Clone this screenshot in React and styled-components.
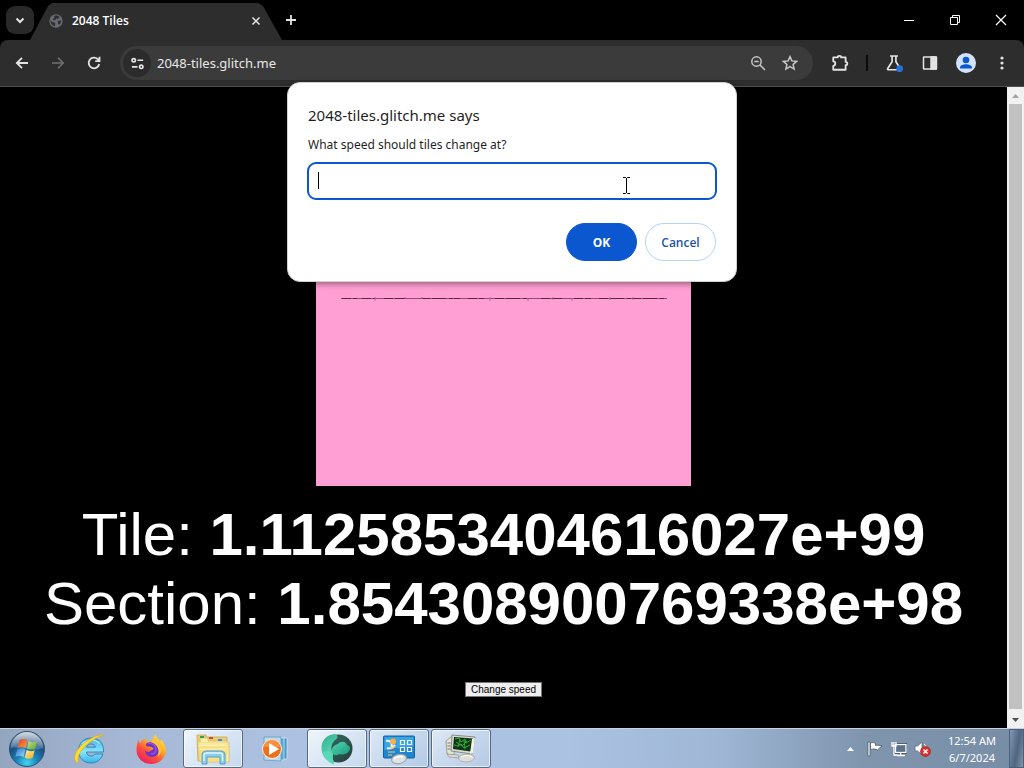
import React from "react";
import styled, { createGlobalStyle } from "styled-components";

const GlobalStyle = createGlobalStyle`
  * { box-sizing: border-box; }
  body { margin: 0; background: #000; }
  button, input { font-family: inherit; margin: 0; padding: 0; }
  svg { display: block; flex: none; }
`;

const uiFont = `"Noto Sans", "Open Sans", sans-serif`;

const Desktop = styled.div`
  position: relative;
  display: flex;
  flex-direction: column;
  min-height: 100vh;
  background: #000;
  font-family: ${uiFont};
`;

/* Browser chrome */
const TabStrip = styled.header`
  display: flex;
  align-items: center;
  height: 40px;
  padding-left: 6px;
  color: #fff;
`;

const IconButton = styled.button`
  display: flex;
  align-items: center;
  justify-content: center;
  flex: none;
  width: ${(p) => p.$size || 28}px;
  height: 28px;
  border: 0;
  border-radius: ${(p) => p.$radius || 14}px;
  background: ${(p) => p.$bg || "transparent"};
  color: ${(p) => p.$color || "#e3e3e3"};
`;

const Tab = styled.div`
  display: flex;
  align-items: center;
  gap: 9px;
  align-self: flex-end;
  width: 252px;
  height: 37px;
  margin: 0 -5px 0 -4px;
  padding: 0 16px 2px 19px;
  background: #2d2d2d;
  clip-path: polygon(0 100%, 18px 3px, 22px 0, 228px 0, 233px 3px, 100% 100%);
`;

const TabTitle = styled.span`
  flex: 1;
  font-family: "Open Sans", "Noto Sans", sans-serif;
  font-size: 12px;
  font-weight: 600;
  line-height: 16px;
  white-space: nowrap;
`;

const WindowControls = styled.div`
  display: flex;
  margin-left: auto;
`;

const Toolbar = styled.nav`
  display: flex;
  align-items: center;
  gap: 8px;
  height: 47px;
  padding: 0 8px;
  border-bottom: 1px solid #505050;
  border-radius: 8px 8px 0 0;
  background: #2d2d2d;
`;

const AddressBar = styled.div`
  display: flex;
  align-items: center;
  gap: 4px;
  flex: 1;
  height: 34px;
  margin-left: 4px;
  padding: 0 9px 0 3px;
  border-radius: 17px;
  background: #3b3b3b;
`;

const AddressInput = styled.input`
  flex: 1;
  min-width: 0;
  margin-left: 2px;
  border: 0;
  outline: 0;
  background: transparent;
  color: #e8e8e8;
  font-size: 13px;
  line-height: 20px;
`;

const ToolbarActions = styled.div`
  display: flex;
  align-items: center;
  gap: 8px;
  padding-left: 5px;
`;

const Divider = styled.span`
  width: 2px;
  height: 16px;
  margin: 0 4px;
  background: #0c0c0c;
`;

/* Page */
const Viewport = styled.div`
  display: flex;
  flex: 1;
`;

const Page = styled.main`
  display: flex;
  flex-direction: column;
  align-items: center;
  flex: 1;
  min-width: 0;
  padding: 24px 0 31px;
  background: #000;
  color: #fff;
  font-family: "Liberation Sans", Arial, sans-serif;
`;

const Tile = styled.section`
  width: 375px;
  height: 375px;
  padding: 183px 24px 0;
  background: #ff9fd3;
`;

const Readout = styled.p`
  margin: 14px 0 44px;
  font-size: 60px;
  line-height: 69px;
  text-align: center;
  white-space: nowrap;
`;

const SpeedButton = styled.button`
  height: 15px;
  padding: 0 5px;
  border: 1px solid #767676;
  background: #efefef;
  color: #000;
  font-size: 10px;
  line-height: 12px;
`;

const ScrollTrack = styled.div`
  display: flex;
  flex-direction: column;
  width: 17px;
  background: #f1f1f1;
`;

const ScrollArrow = styled.button`
  display: flex;
  align-items: center;
  justify-content: center;
  height: 17px;
  border: 0;
  background: #f1f1f1;
`;

const ScrollThumb = styled.div`
  flex: 1;
  margin: 0 2px 2px;
  background: #c1c1c1;
`;

/* Prompt */
const Prompt = styled.form`
  position: absolute;
  top: 82px;
  left: 50%;
  width: 450px;
  transform: translateX(-50%);
  padding: 21px 20px 20px;
  border: 1px solid #d0d0d0;
  border-radius: 13px;
  background: #fff;
  box-shadow: 0 2px 6px rgba(0, 0, 0, 0.4);
  color: #1f1f1f;
`;

const PromptTitle = styled.h1`
  margin: 0 0 10px;
  font-size: 15px;
  font-weight: 400;
  line-height: 22px;
`;

const PromptLabel = styled.label`
  display: block;
  margin-bottom: 8px;
  font-size: 12px;
  line-height: 18px;
`;

const Field = styled.div`
  position: relative;
  margin: 0 -1px 23px;
`;

const PromptInput = styled.input`
  display: block;
  width: 100%;
  height: 38px;
  padding: 0 10px;
  border: 2px solid #0b57d0;
  border-radius: 9px;
  outline: 0;
  background: #fff;
  font-size: 13px;
`;

const Caret = styled.span`
  position: absolute;
  top: 10px;
  left: 11px;
  width: 1px;
  height: 17px;
  background: #000;
`;

const Pointer = styled.span`
  position: absolute;
  top: 15px;
  right: 86px;
`;

const PromptActions = styled.div`
  display: flex;
  justify-content: flex-end;
  gap: 8px;
`;

const PromptButton = styled.button`
  width: 71px;
  height: 38px;
  border: 1px solid ${(p) => (p.$primary ? "#0b57d0" : "#b5d3f3")};
  border-radius: 19px;
  background: ${(p) => (p.$primary ? "#0b57d0" : "#fff")};
  color: ${(p) => (p.$primary ? "#fff" : "#1a53ad")};
  font-family: "Open Sans", "Noto Sans", sans-serif;
  font-size: 12px;
  font-weight: ${(p) => (p.$primary ? 700 : 600)};
`;

/* Taskbar */
const Taskbar = styled.footer`
  display: flex;
  align-items: stretch;
  height: 40px;
  border-top: 1px solid #c5d2e2;
  background: linear-gradient(90deg, #94a5bf 0, #a5b7d4 12%, #adc2e2 30%, #abc2e3 55%, #9fb7d5 70%, #8095ae 84%, #778ca5 100%);
`;

const StartButton = styled.button`
  display: flex;
  align-items: center;
  justify-content: center;
  width: 54px;
  border: 0;
  background: transparent;
`;

const TaskList = styled.div`
  display: flex;
  gap: 2px;
  padding-left: 5px;
`;

const TaskButton = styled.button`
  display: flex;
  align-items: center;
  justify-content: center;
  width: 60px;
  border: 1px solid ${(p) => (p.$open ? "#596b82" : "transparent")};
  border-radius: 3px;
  background: ${(p) => (p.$open ? `linear-gradient(135deg, ${p.$active ? "#eef4fb, #c5d8ee" : "#dce8f5, #b3c9e5"})` : "transparent")};
  box-shadow: ${(p) => (p.$open ? "inset 0 0 0 1px rgba(255,255,255,0.65)" : "none")};
`;

const Tray = styled.div`
  display: flex;
  align-items: center;
  gap: 7px;
  margin-left: auto;
`;

const TrayButton = styled.button`
  display: flex;
  align-items: center;
  justify-content: center;
  width: 17px;
  height: 24px;
  border: 0;
  background: transparent;
`;

const Clock = styled.time`
  width: 68px;
  color: #fff;
  font-size: 11px;
  line-height: 17px;
  text-align: center;
  white-space: nowrap;
`;

const ShowDesktop = styled.button`
  align-self: stretch;
  width: 15px;
  margin-left: -4px;
  border: 1px solid #4b6078;
  background: linear-gradient(100deg, #8297b0, #4f6580 55%, #8295ab);
`;

const Icon = ({ size = 16, children, w = 1.6, ...rest }) => (
  <svg width={size} height={size} viewBox="0 0 16 16" fill="none" stroke="currentColor" strokeWidth={w} aria-hidden="true" {...rest}>
    {children}
  </svg>
);

const Globe = () => (
  <Icon size={14} stroke="none">
    <circle cx="8" cy="8" r="7.6" fill="#686a6e" />
    <path d="M1.700 7.200 4 9.300l2.300.3 1 1.600-.6 2.800C4 13.600 1.500 11 1.700 7.200ZM6 2.200c2-.8 4.300-.4 6 1.200l-1.600 2.200-2.200-.4-.8 1.700-2 .3-1.200-1.300 1.800-1.300ZM10 8l3-1 1 1.700-1.600 3.300-2-.7Z" fill="#303134" />
  </Icon>
);

const WinOrb = () => (
  <svg width="38" height="38" viewBox="0 0 38 38" aria-hidden="true">
    <defs>
      <radialGradient id="orb" cx="50%" cy="90%" r="90%">
        <stop offset="0" stopColor="#43d6f4" />
        <stop offset=".35" stopColor="#187fb9" />
        <stop offset=".65" stopColor="#1d4f80" />
        <stop offset="1" stopColor="#6d85a3" />
      </radialGradient>
      <linearGradient id="orbShine" x1="0" y1="0" x2="0" y2="1">
        <stop offset="0" stopColor="#fff" stopOpacity=".7" />
        <stop offset="1" stopColor="#fff" stopOpacity=".15" />
      </linearGradient>
      <linearGradient id="paneRed" x1="0" y1="0" x2="1" y2="1"><stop offset="0" stopColor="#e2401b" /><stop offset="1" stopColor="#f9a052" /></linearGradient>
      <linearGradient id="paneGreen" x1="0" y1="0" x2="1" y2="1"><stop offset="0" stopColor="#cbe586" /><stop offset="1" stopColor="#5aa22b" /></linearGradient>
      <linearGradient id="paneBlue" x1="0" y1="0" x2="1" y2="1"><stop offset="0" stopColor="#2773c6" /><stop offset="1" stopColor="#a3dcf8" /></linearGradient>
      <linearGradient id="paneGold" x1="0" y1="0" x2="1" y2="1"><stop offset="0" stopColor="#fff09a" /><stop offset="1" stopColor="#f5a71a" /></linearGradient>
    </defs>
    <circle cx="19" cy="19" r="17.500" fill="url(#orb)" stroke="#35506d" />
    <path d="M3 18a16 16 0 0 1 32 0c-9 4-22-2-32 0Z" fill="url(#orbShine)" />
    <path d="M11.500 10c3-1.600 5.600-1.200 8 .2l-1.800 8c-2.500-1.400-5-1.500-8-.4Z" fill="url(#paneRed)" />
    <path d="M20.700 11c2.500 1.400 5 1.700 8.300.2l-1.900 7.500c-2.900 1.300-5.700 1-8.200-.3Z" fill="url(#paneGreen)" />
    <path d="M9.300 19c2.900-1.200 5.600-1 8.100.4l-1.800 7.500c-2.500-1.400-5.100-1.600-8.200-.3Z" fill="url(#paneBlue)" />
    <path d="M18.600 20c2.500 1.400 5.200 1.600 8.100.3l-1.900 7.500c-3 1.400-5.600 1.100-8.100-.4Z" fill="url(#paneGold)" />
  </svg>
);

const Explorer = () => (
  <svg width="32" height="32" viewBox="0 0 32 32" aria-hidden="true">
    <defs>
      <linearGradient id="ieBlue" x1="0" y1="0" x2="0" y2="1">
        <stop offset="0" stopColor="#45b4e8" /><stop offset=".55" stopColor="#8ce4fa" /><stop offset="1" stopColor="#36b2e6" />
      </linearGradient>
    </defs>
    <path d="M30.500 19H13.500c.2 2.600 1.900 4 4.600 4 1.800 0 3.200-.6 4-2h7.800C28.300 26.400 24.200 30 18 30 10.600 30 5.500 25 5.500 17.700S10.700 5 18.200 5c7.900 0 12.800 5.200 12.300 14Zm-8-4.800c-.4-2-1.900-3.200-4.300-3.200-2.400 0-4 1.200-4.600 3.200Z" fill="url(#ieBlue)" stroke="#2183bd" strokeWidth=".9" />
    <path d="M9 11c4-4.700 13-5.500 17.500-.5" fill="none" stroke="#c5f3ff" strokeWidth="1.200" opacity=".8" />
    <path d="M5.500 30C-3 27 3.500 14.500 14.500 7.500 21.500 3.100 28.700.6 31 3c-3-.3-7.500 1.500-12.700 5.200C9 14.600 3.200 23 5.500 30Z" fill="#ffdb2e" stroke="#d9a51b" strokeWidth=".6" />
  </svg>
);

const Firefox = () => (
  <svg width="32" height="32" viewBox="0 0 32 32" aria-hidden="true">
    <defs>
      <linearGradient id="fox" x1=".9" y1="0" x2=".2" y2="1">
        <stop offset="0" stopColor="#fff044" /><stop offset=".38" stopColor="#ffad2b" /><stop offset=".65" stopColor="#ff503b" /><stop offset="1" stopColor="#e21963" />
      </linearGradient>
    </defs>
    <path d="M3.500 6.500c.2 2 .7 2.900 1.500 3.700 1.500-2.500 3.600-4 6-4.600-.6 1.300-.6 2-.4 2.600 3-.7 5.200-.7 7 .2 0-3 .8-5.300 3.200-7.200.3 3.500 2.800 5.300 4.700 7.400l.6-2.400c3.700 4.300 6 10 4 15.500C28 27 22.800 31 16.400 31 7.700 31 1.500 24.700 1.500 17c0-4 1-7.500 2-10.500Z" fill="url(#fox)" />
    <path d="M12 10c5-3 12 .5 12 7 0 4-3 7-7 7s-7-3-7-6.500c1 1 2 1.500 3 1.500 2.500 0 3-2.500 6-3-1.500-2.500-4-2-6.500-2.500-2-.4-2.200-2.200-.5-3.500Z" fill="#6b35c7" />
    <path d="M13 10c4 0 8 2 8 6s-3 5-5 5" stroke="#a04fe0" strokeWidth="1.500" fill="none" />
    <path d="M17 7c5 0 9 4 9 10 0 3-1.400 5.300-3.300 6.800 1.500-4 1.300-8-1.200-11-1.500-1.800-3.500-3-5.500-3.500Z" fill="#ffc335" />
  </svg>
);

const Folder = () => (
  <svg width="34" height="34" viewBox="0 0 34 34" aria-hidden="true">
    <path d="M1 5V3h9v2h21v24H2Z" fill="#edcf70" stroke="#c3a759" strokeWidth=".8" />
    <path d="M4 6h8v3h18l3 2v19H5Z" fill="#fff0ae" stroke="#d2b765" strokeWidth=".8" />
    <path d="M4 4h4v2H4Z" fill="#3b9f4b" /><path d="M13 5h4v2h-4Z" fill="#cb4928" /><path d="M22 7h4v2h-4Z" fill="#3f8fcb" />
    <path d="M2 10h30l-1 19H4Z" fill="#f7df82" />
    <path d="M3 13.500h28M4 12h26M4 17h26" stroke="#fff4c0" strokeWidth="1.200" />
    <path d="M6 32V23c0-3 2-4 5-4h13c3 0 5 1 5 4v9h-5v-7H11v7Z" fill="#8bcdf0" stroke="#519fcf" />
    <path d="M8 29v-6c0-1 1-2 3-2h13c2 0 2.500 1 2.500 2v6" stroke="#dff6ff" strokeWidth="1.400" fill="none" />
  </svg>
);

const MediaPlayer = () => (
  <svg width="28" height="28" viewBox="0 0 28 28" aria-hidden="true">
    <path d="M11 3h15v21l-15 1Z" fill="#4b9ac9" stroke="#d8edf7" strokeWidth=".7" />
    <path d="M8 3h15v22H8Z" fill="#5ca9d2" stroke="#d8edf7" strokeWidth=".7" />
    <path d="M3 2h17v24L3 25Z" fill="#b9dbed" stroke="#5096bd" strokeWidth=".7" />
    <circle cx="11" cy="14" r="9.500" fill="#ee701b" stroke="#fff0df" />
    <path d="M3 12a8 8 0 0 1 16 0c-6 1-10-1-16 0" fill="#ffb36f" opacity=".5" />
    <path d="m8 8 10 6-10 6Z" fill="#fff" />
  </svg>
);

const TealOrb = () => (
  <svg width="34" height="34" viewBox="0 0 34 34" aria-hidden="true">
    <defs>
      <linearGradient id="teal" x1="0" y1="0" x2=".4" y2="1">
        <stop offset="0" stopColor="#2fae90" /><stop offset="1" stopColor="#63e0c0" />
      </linearGradient>
      <linearGradient id="tealLobe" x1="0" y1="0" x2="1" y2="1">
        <stop offset="0" stopColor="#4ed3b3" /><stop offset="1" stopColor="#1f9b7b" />
      </linearGradient>
      <linearGradient id="tealBase" x1="0" y1="0" x2="1" y2="1">
        <stop offset="0" stopColor="#346e62" /><stop offset="1" stopColor="#263f3c" />
      </linearGradient>
    </defs>
    <circle cx="18.500" cy="16.500" r="14" fill="url(#tealBase)" />
    <path d="M15 2C7 2.500 1.500 8 1.500 16c0 7 4 13 12.500 16.500-.5-4-2-7-1-11-3-5-2-11 4-15 1-2 0-4-2-4.500Z" fill="url(#teal)" />
    <path d="M12 20c-1-4 2-7 6-8 2-3 8-3 9 1 3 1 4 4 2 6-3 4-7 4-10 3-2 2-6 2-7-2Z" fill="url(#tealLobe)" />
    <path d="M3 20c1 5 5 10 11 12.500-.5-4-2-7-1-11-3-2-7-3-10-1.500Z" fill="#59d8b7" />
  </svg>
);

const ControlPanel = () => (
  <svg width="34" height="32" viewBox="0 0 34 32" aria-hidden="true">
    <rect x="1.500" y="3" width="31" height="22" rx="1" fill="#2186ce" stroke="#14649b" />
    <path d="M2.500 4h29v9c-12 4-20 0-29 4Z" fill="#3ba5e3" />
    <path d="M4 8c5-1 7 3 5 8M5 15c2 1 6 0 8-3" stroke="#e8f7ff" strokeWidth="2" fill="none" />
    <circle cx="11" cy="8.500" r="3" fill="#ffad45" />
    <path d="M8 14c2 2 4 1 5-1" stroke="#ffc068" strokeWidth="1.500" fill="none" />
    <path d="M6 19h7M6 22h4" stroke="#f3c777" strokeWidth="1.200" />
    <g fill="none" stroke="#eefaff" strokeWidth="1.200"><path d="M18.500 7.500h4v4h-4ZM25.500 7.500h4v4h-4ZM18.500 14.500h4v4h-4ZM25.500 14.500h4v4h-4Z" /></g>
    <ellipse cx="17" cy="26" rx="7.500" ry="4.500" fill="#dfe1e2" stroke="#99a4ab" transform="rotate(-12 17 26)" />
    <path d="M12 26c2-2 6-3 9-2" stroke="#fff" fill="none" strokeWidth="1.800" />
  </svg>
);

const Monitor = () => (
  <svg width="34" height="32" viewBox="0 0 34 32" aria-hidden="true">
    <path d="m2 8 5-4 4 1-1 17-7-1Z" fill="#e6e4d9" stroke="#8b8c84" strokeWidth=".8" />
    <path d="M3.500 10h3M3.500 13h3M3.500 16h3" stroke="#777" />
    <path d="m8 2 23 2-3 17-21-3Z" fill="#d8d9cf" stroke="#747b75" strokeWidth=".8" />
    <path d="m10 4 19 1.500-2.500 13L9 16Z" fill="#103715" />
    <path d="m11 6 4-1 2 4 4-3 1 4 5-3M10 12l4 1 3-2 3 4 6-3M16 6l-2 8M20 7l1 9M12 9l6 4 5-5" fill="none" stroke="#36a63b" strokeWidth="1" />
    <path d="m28 6 3-1-2 15-3 1Z" fill="#f3f1e9" />
    <path d="m3 21 11 1 1 3-10-1Z" fill="#dbdcd4" stroke="#92958d" strokeWidth=".7" />
    <path d="M15 24c2-3 11-4 15-1 2 3-3 6-8 6-4 0-9-2-7-5Z" fill="#dedfd8" stroke="#9da098" strokeWidth=".7" />
    <path d="M17 24c4-2 8-2 11 0" stroke="#fff" fill="none" />
  </svg>
);

const tasks = [
  { name: "Internet Explorer", Art: Explorer },
  { name: "Firefox", Art: Firefox },
  { name: "File Explorer", Art: Folder, open: true, active: true },
  { name: "Media Player", Art: MediaPlayer },
  { name: "Browser", Art: TealOrb, open: true, active: true },
  { name: "Control Panel", Art: ControlPanel, open: true },
  { name: "System Monitor", Art: Monitor, open: true },
];

export default function App() {
  return (
    <Desktop>
      <GlobalStyle />
      <TabStrip>
        <IconButton $bg="#292929" $radius={9} aria-label="Search tabs"><Icon w={2}><path d="m4.500 6.500 3.500 3.500 3.500-3.500" /></Icon></IconButton>
        <Tab>
          <Globe />
          <TabTitle>2048 Tiles</TabTitle>
          <IconButton $size={20} aria-label="Close tab"><Icon size={14} w={1.8}><path d="m4 4 8 8M12 4l-8 8" /></Icon></IconButton>
        </Tab>
        <IconButton aria-label="New tab"><Icon w={1.8}><path d="M8 3v10M3 8h10" /></Icon></IconButton>
        <WindowControls>
          <IconButton $size={46} $color="#fff" aria-label="Minimize"><Icon w={1}><path d="M3 8.500h10" /></Icon></IconButton>
          <IconButton $size={46} $color="#fff" aria-label="Restore"><Icon w={1}><path d="M3.500 5.500h7v7h-7ZM5.500 5.500v-2h7v7h-2" /></Icon></IconButton>
          <IconButton $size={46} $color="#fff" aria-label="Close"><Icon w={1.2}><path d="m3 3 10 10M13 3 3 13" /></Icon></IconButton>
        </WindowControls>
      </TabStrip>

      <Toolbar>
        <IconButton aria-label="Back"><Icon w={1.8}><path d="M14 8H3M8 2.800 2.800 8 8 13.200" /></Icon></IconButton>
        <IconButton $color="#707070" aria-label="Forward"><Icon><path d="M2 8h11M8 2.800 13.200 8 8 13.200" /></Icon></IconButton>
        <IconButton aria-label="Reload"><Icon w={1.8}><path d="M13.200 9a5.300 5.300 0 1 1-1.500-4.800l1.200 1.200M13.500 1.800v4.400H9.200" /></Icon></IconButton>
        <AddressBar>
          <IconButton $bg="#2b2b2b" aria-label="Site information"><Icon size={15} w={1.8}><circle cx="4" cy="4.500" r="1.800" /><path d="M8 4.500h6M2 11.500h6" /><circle cx="12" cy="11.500" r="1.800" /></Icon></IconButton>
          <AddressInput aria-label="Address" defaultValue="2048-tiles.glitch.me" />
          <IconButton $color="#c7c7c7" aria-label="Zoom"><Icon w={1.5}><circle cx="6.500" cy="6.500" r="4.700" /><path d="m10 10 5 5M4.300 6.500h4.400" /></Icon></IconButton>
          <IconButton $color="#c7c7c7" aria-label="Bookmark"><Icon w={1.5}><path d="m8 1.600 1.900 4.300 4.700.5-3.500 3.100 1 4.600L8 11.700l-4.100 2.400 1-4.600-3.500-3.100 4.700-.5Z" /></Icon></IconButton>
        </AddressBar>
        <ToolbarActions>
          <IconButton aria-label="Extensions"><Icon size={18} w={1.6}><path d="M2 3h4c0-1.700 3-1.700 3 0h4v4c2 0 2 3 0 3v4H2v-3.500c2.400 0 2.400-4 0-4Z" strokeLinejoin="round" /></Icon></IconButton>
          <Divider />
          <IconButton aria-label="Labs"><Icon size={18} w={1.5}><path d="M4.500 1.800h7M6.300 2v4.800l-4 6.300c-.2.500 0 .9.500.9h10.400c.5 0 .7-.4.500-.9l-4-6.300V2" /><circle cx="13" cy="13" r="3" fill="#2871d5" stroke="none" /></Icon></IconButton>
          <IconButton aria-label="Side panel"><Icon w={1.5}><rect x="1.500" y="2" width="13" height="12" rx=".5" /><path d="M9 2h5v12H9Z" fill="currentColor" /></Icon></IconButton>
          <IconButton aria-label="Profile">
            <svg width="20" height="20" viewBox="0 0 20 20" aria-hidden="true"><circle cx="10" cy="10" r="10" fill="#d3e3fd" /><circle cx="10" cy="7" r="3.300" fill="#0b57d0" /><path d="M4 15.500v-1c0-2 3.500-3.200 6-3.200s6 1.200 6 3.200v1Z" fill="#0b57d0" /></svg>
          </IconButton>
          <IconButton aria-label="Menu"><Icon stroke="none"><g fill="currentColor"><circle cx="8" cy="3" r="1.600" /><circle cx="8" cy="8" r="1.600" /><circle cx="8" cy="13" r="1.600" /></g></Icon></IconButton>
        </ToolbarActions>
      </Toolbar>

      <Viewport>
        <Page>
          <Tile>
            <svg width="327" height="9" viewBox="0 0 327 9" aria-hidden="true">
              <path d="M1 4.500h326" stroke="#944c75" />
              <path d="M2 4.500h15m5 0h13m9 0h22m15 0h39m8 0h16m11 0h34m12 0h21m12 0h17m8 0h66" stroke="#552841" strokeDasharray="9 2 14 3 4 1" />
              <path d="M35 3v4M65 3v2M82 3v2M150 3v4M188 4v3M213 3v3M232 4v3M270 3v3M293 3v3" stroke="#b86596" />
            </svg>
          </Tile>
          <Readout>
            Tile: <b>1.1125853404616027e+99</b><br />
            Section: <b>1.854308900769338e+98</b>
          </Readout>
          <SpeedButton>Change speed</SpeedButton>
        </Page>
        <ScrollTrack>
          <ScrollArrow aria-label="Scroll up"><svg width="7" height="4" aria-hidden="true"><path d="M0 4 3.500 0 7 4Z" fill="#a3a3a3" /></svg></ScrollArrow>
          <ScrollThumb />
          <ScrollArrow aria-label="Scroll down"><svg width="7" height="4" aria-hidden="true"><path d="M0 0h7L3.500 4Z" fill="#505050" /></svg></ScrollArrow>
        </ScrollTrack>
      </Viewport>

      <Prompt onSubmit={(e) => e.preventDefault()}>
        <PromptTitle>2048-tiles.glitch.me says</PromptTitle>
        <PromptLabel htmlFor="speed">What speed should tiles change at?</PromptLabel>
        <Field>
          <PromptInput id="speed" type="text" />
          <Caret />
          <Pointer>
            <svg width="9" height="17" viewBox="0 0 9 17" aria-hidden="true"><path d="M1 .500h2.500l1 1 1-1H8M4.500 1v15M1 16.500h2.500l1-1 1 1H8" fill="none" stroke="#000" /></svg>
          </Pointer>
        </Field>
        <PromptActions>
          <PromptButton $primary type="submit">OK</PromptButton>
          <PromptButton type="button">Cancel</PromptButton>
        </PromptActions>
      </Prompt>

      <Taskbar>
        <StartButton aria-label="Start"><WinOrb /></StartButton>
        <TaskList>
          {tasks.map(({ name, Art, open, active }) => (
            <TaskButton key={name} aria-label={name} $open={open} $active={active}><Art /></TaskButton>
          ))}
        </TaskList>
        <Tray>
          <TrayButton aria-label="Show hidden icons"><svg width="7" height="4" aria-hidden="true"><path d="M0 4 3.500 0 7 4Z" fill="#fff" /></svg></TrayButton>
          <TrayButton aria-label="Action Center">
            <svg width="16" height="16" viewBox="0 0 16 16" aria-hidden="true"><path d="M1 1h2v14H1Z" fill="#fff" stroke="#3d4d60" strokeWidth=".7" /><path d="M3.500 2c2-.7 3.500-.5 5 .5v2c2-.7 4 0 6.500.5-2 .8-2.500 2.500-4.500 4-1.500-1-4-1.500-7-.5Z" fill="#fff" stroke="#3d4d60" strokeWidth=".7" /></svg>
          </TrayButton>
          <TrayButton aria-label="Network">
            <svg width="16" height="16" viewBox="0 0 16 16" aria-hidden="true"><rect x="4.500" y="3.500" width="10.500" height="8" fill="#54697f" stroke="#33455a" strokeWidth="3" /><rect x="4.500" y="3.500" width="10.500" height="8" fill="#5d7289" stroke="#fff" strokeWidth="1.300" /><path d="M9.500 12v2M6 14.500h8M1 1v4h4V1M3 1v13h3" fill="none" stroke="#fff" strokeWidth="1.300" /></svg>
          </TrayButton>
          <TrayButton aria-label="Volume muted">
            <svg width="17" height="16" viewBox="0 0 17 16" aria-hidden="true"><path d="M1 5h2.500L8 1v13l-4.500-4H1Z" fill="#fff" stroke="#4c5d70" strokeWidth=".7" /><path d="M10 3c1.500 1 2 2.500 2 4" stroke="#fff" fill="none" /><circle cx="11.500" cy="10.500" r="5" fill="#d8322b" stroke="#9d1e1b" strokeWidth=".6" /><path d="m9.500 8.500 4 4m0-4-4 4" stroke="#fff" strokeWidth="1.500" /></svg>
          </TrayButton>
          <Clock>12:54 AM<br />6/7/2024</Clock>
          <ShowDesktop aria-label="Show desktop" />
        </Tray>
      </Taskbar>
    </Desktop>
  );
}
